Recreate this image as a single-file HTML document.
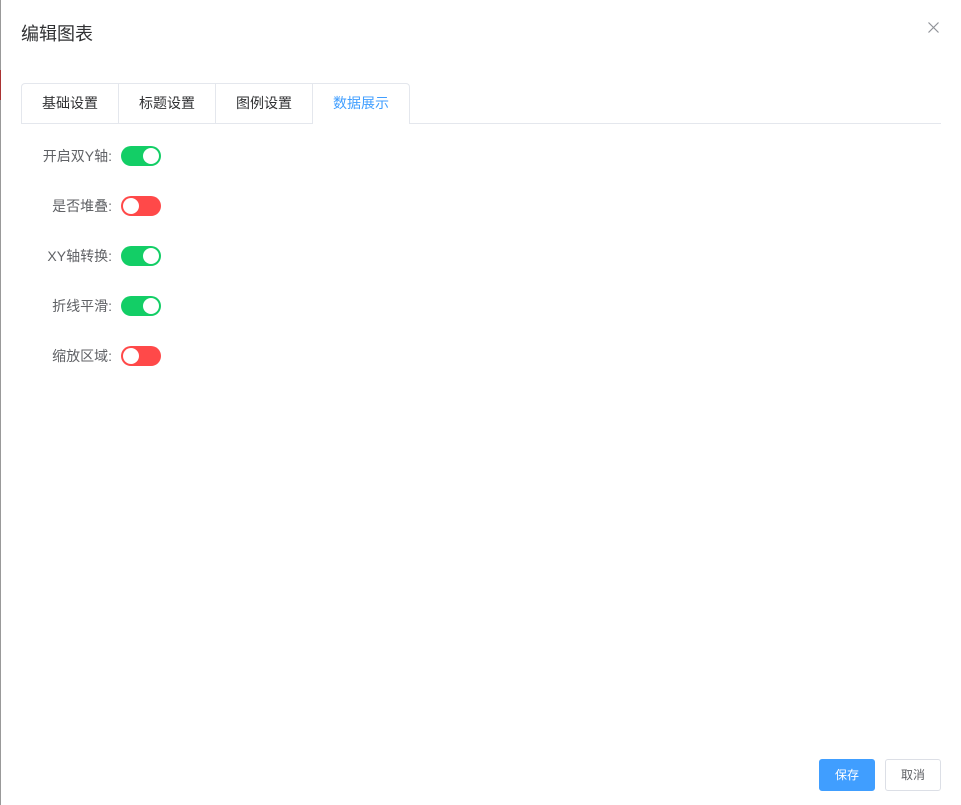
<!DOCTYPE html>
<html><head><meta charset="utf-8"><style>
*{margin:0;padding:0;box-sizing:border-box}
body{width:961px;height:805px;background:#fff;font-family:"Liberation Sans","Noto Sans CJK SC",sans-serif;position:relative;overflow:hidden}
.edge{position:absolute;left:0;top:0;width:1px;height:805px;background:#999}
.red{position:absolute;left:0;top:70px;width:1px;height:30px;background:#a33}
.title{position:absolute;left:21px;top:20px;font-size:18px;color:#303133}
.close{position:absolute;left:928px;top:22px}
.tabs{position:absolute;left:21px;top:83px;height:41px;display:flex}
.tabline{position:absolute;left:21px;top:123px;width:920px;height:1px;background:#e4e7ed}
.tab{width:97px;height:40px;border:1px solid #e4e7ed;border-left:none;border-bottom:none;font-size:14px;color:#303133;text-align:center;line-height:39px}
.tab:first-child{width:98px;border-left:1px solid #e4e7ed;border-top-left-radius:4px}
.tab.on{color:#409eff;background:#fff;height:41px;position:relative;z-index:2;border-top-right-radius:4px}
.row{position:absolute;left:0;width:200px;height:20px}
.lab{position:absolute;right:88px;top:0;font-size:14px;color:#606266;line-height:20px;white-space:nowrap}
.sw{position:absolute;left:121px;top:0;width:40px;height:20px;border-radius:10px}
.sw i{position:absolute;top:2px;width:16px;height:16px;border-radius:50%;background:#fff}
.g{background:#13ce66}.g i{left:22px}
.r{background:#ff4949}.r i{left:2px}
.btn{position:absolute;top:759px;width:56px;height:32px;border-radius:3px;font-size:12px;text-align:center;line-height:30px}
</style></head><body>
<div class="edge"></div><div class="red"></div>
<div class="title">编辑图表</div>
<svg class="close" width="11" height="11" viewBox="0 0 11 11"><path d="M0.5 0.5L10.5 10.5M10.5 0.5L0.5 10.5" stroke="#909399" stroke-width="1.2"/></svg>
<div class="tabline"></div>
<div class="tabs"><div class="tab">基础设置</div><div class="tab">标题设置</div><div class="tab">图例设置</div><div class="tab on">数据展示</div></div>
<div class="row" style="top:146px"><span class="lab">开启双Y轴:</span><div class="sw g"><i></i></div></div>
<div class="row" style="top:196px"><span class="lab">是否堆叠:</span><div class="sw r"><i></i></div></div>
<div class="row" style="top:246px"><span class="lab">XY轴转换:</span><div class="sw g"><i></i></div></div>
<div class="row" style="top:296px"><span class="lab">折线平滑:</span><div class="sw g"><i></i></div></div>
<div class="row" style="top:346px"><span class="lab">缩放区域:</span><div class="sw r"><i></i></div></div>
<div class="btn" style="left:819px;background:#409eff;color:#fff;border:1px solid #409eff">保存</div>
<div class="btn" style="left:885px;background:#fff;color:#606266;border:1px solid #dcdfe6">取消</div>
</body></html>
